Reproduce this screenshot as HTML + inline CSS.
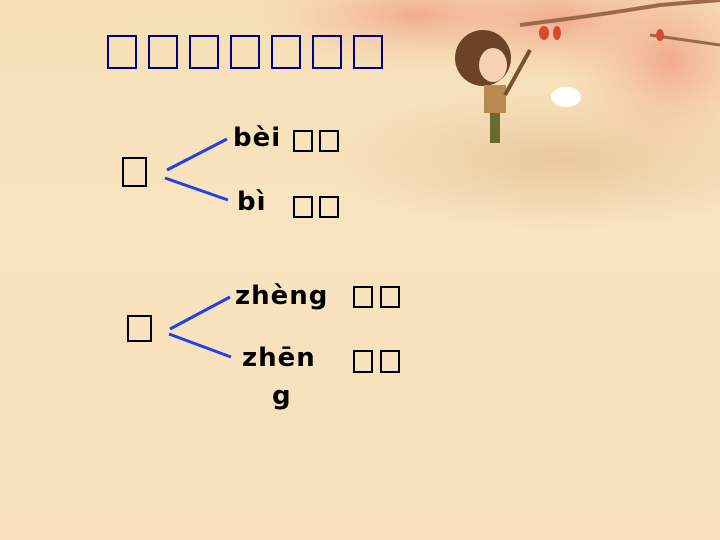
<!DOCTYPE html>
<html><head><meta charset="utf-8"><style>
body{margin:0;width:720px;height:540px;overflow:hidden;position:relative;
background:linear-gradient(180deg,#f6dfb6 0%,#f8e4c0 40%,#f7e0bb 100%);font-family:"DejaVu Sans","Liberation Sans",sans-serif}
.b{position:absolute;box-sizing:border-box;border:2px solid #000}
.n{border-color:#000080;border-width:2px}
.t{position:absolute;font-weight:bold;font-size:26px;color:#000;line-height:1;letter-spacing:1px}
</style></head><body>
<svg width="720" height="540" style="position:absolute;left:0;top:0">
<defs>
<radialGradient id="g1" cx="0.5" cy="0.5" r="0.5"><stop offset="0" stop-color="#f0a088" stop-opacity=".85"/><stop offset="1" stop-color="#f6c8a8" stop-opacity="0"/></radialGradient>
<radialGradient id="g2" cx="0.5" cy="0.5" r="0.5"><stop offset="0" stop-color="#e6c296" stop-opacity=".8"/><stop offset="1" stop-color="#e8c49a" stop-opacity="0"/></radialGradient>
</defs>
<ellipse cx="560" cy="160" rx="240" ry="70" fill="url(#g2)"/>
<ellipse cx="420" cy="15" rx="170" ry="55" fill="url(#g1)"/>
<ellipse cx="560" cy="20" rx="150" ry="60" fill="url(#g1)"/>
<ellipse cx="670" cy="60" rx="110" ry="100" fill="url(#g1)"/>
<path d="M520 25 Q600 15 660 5 L720 0" stroke="#9a6a4a" stroke-width="4" fill="none"/>
<path d="M650 35 L720 45" stroke="#9a6a4a" stroke-width="3" fill="none"/>
<ellipse cx="544" cy="33" rx="5" ry="7" fill="#d84a30"/><ellipse cx="557" cy="33" rx="4" ry="7" fill="#d84a30"/>
<ellipse cx="660" cy="35" rx="4" ry="6" fill="#d84a30"/>
<circle cx="483" cy="58" r="28" fill="#6b4428"/><ellipse cx="493" cy="65" rx="14" ry="17" fill="#f6d2b0"/>
<rect x="484" y="85" width="22" height="28" fill="#b98a50"/><rect x="490" y="113" width="10" height="30" fill="#6a6a30"/>
<path d="M505 95 L530 50" stroke="#7a5030" stroke-width="4"/>
<ellipse cx="566" cy="97" rx="15" ry="10" fill="#fff"/>
<g stroke="#2040e8" stroke-width="3"><line x1="167" y1="170" x2="227" y2="139"/><line x1="165" y1="178" x2="228" y2="200"/><line x1="170" y1="329" x2="230" y2="297"/><line x1="169" y1="334" x2="231" y2="357"/></g>
</svg>
<div class="b n" style="left:107px;top:35px;width:30px;height:34px"></div>
<div class="b n" style="left:148px;top:35px;width:30px;height:34px"></div>
<div class="b n" style="left:189px;top:35px;width:30px;height:34px"></div>
<div class="b n" style="left:230px;top:35px;width:30px;height:34px"></div>
<div class="b n" style="left:271px;top:35px;width:30px;height:34px"></div>
<div class="b n" style="left:312px;top:35px;width:30px;height:34px"></div>
<div class="b n" style="left:353px;top:35px;width:30px;height:34px"></div>
<div class="b" style="left:122px;top:157px;width:25px;height:30px"></div>
<div class="b" style="left:127px;top:315px;width:25px;height:27px"></div>
<div class="b" style="left:293px;top:130px;width:20px;height:22px"></div>
<div class="b" style="left:319px;top:130px;width:20px;height:22px"></div>
<div class="b" style="left:293px;top:196px;width:20px;height:22px"></div>
<div class="b" style="left:319px;top:196px;width:20px;height:22px"></div>
<div class="b" style="left:353px;top:286px;width:20px;height:22px"></div>
<div class="b" style="left:380px;top:286px;width:20px;height:22px"></div>
<div class="b" style="left:353px;top:350px;width:20px;height:23px"></div>
<div class="b" style="left:380px;top:350px;width:20px;height:23px"></div>
<div class="t" style="left:233px;top:125px">bèi</div>
<div class="t" style="left:237px;top:189px">bì</div>
<div class="t" style="left:235px;top:283px">zhèng</div>
<div class="t" style="left:242px;top:345px">zhēn</div>
<div class="t" style="left:272px;top:383px">g</div>
</body></html>
